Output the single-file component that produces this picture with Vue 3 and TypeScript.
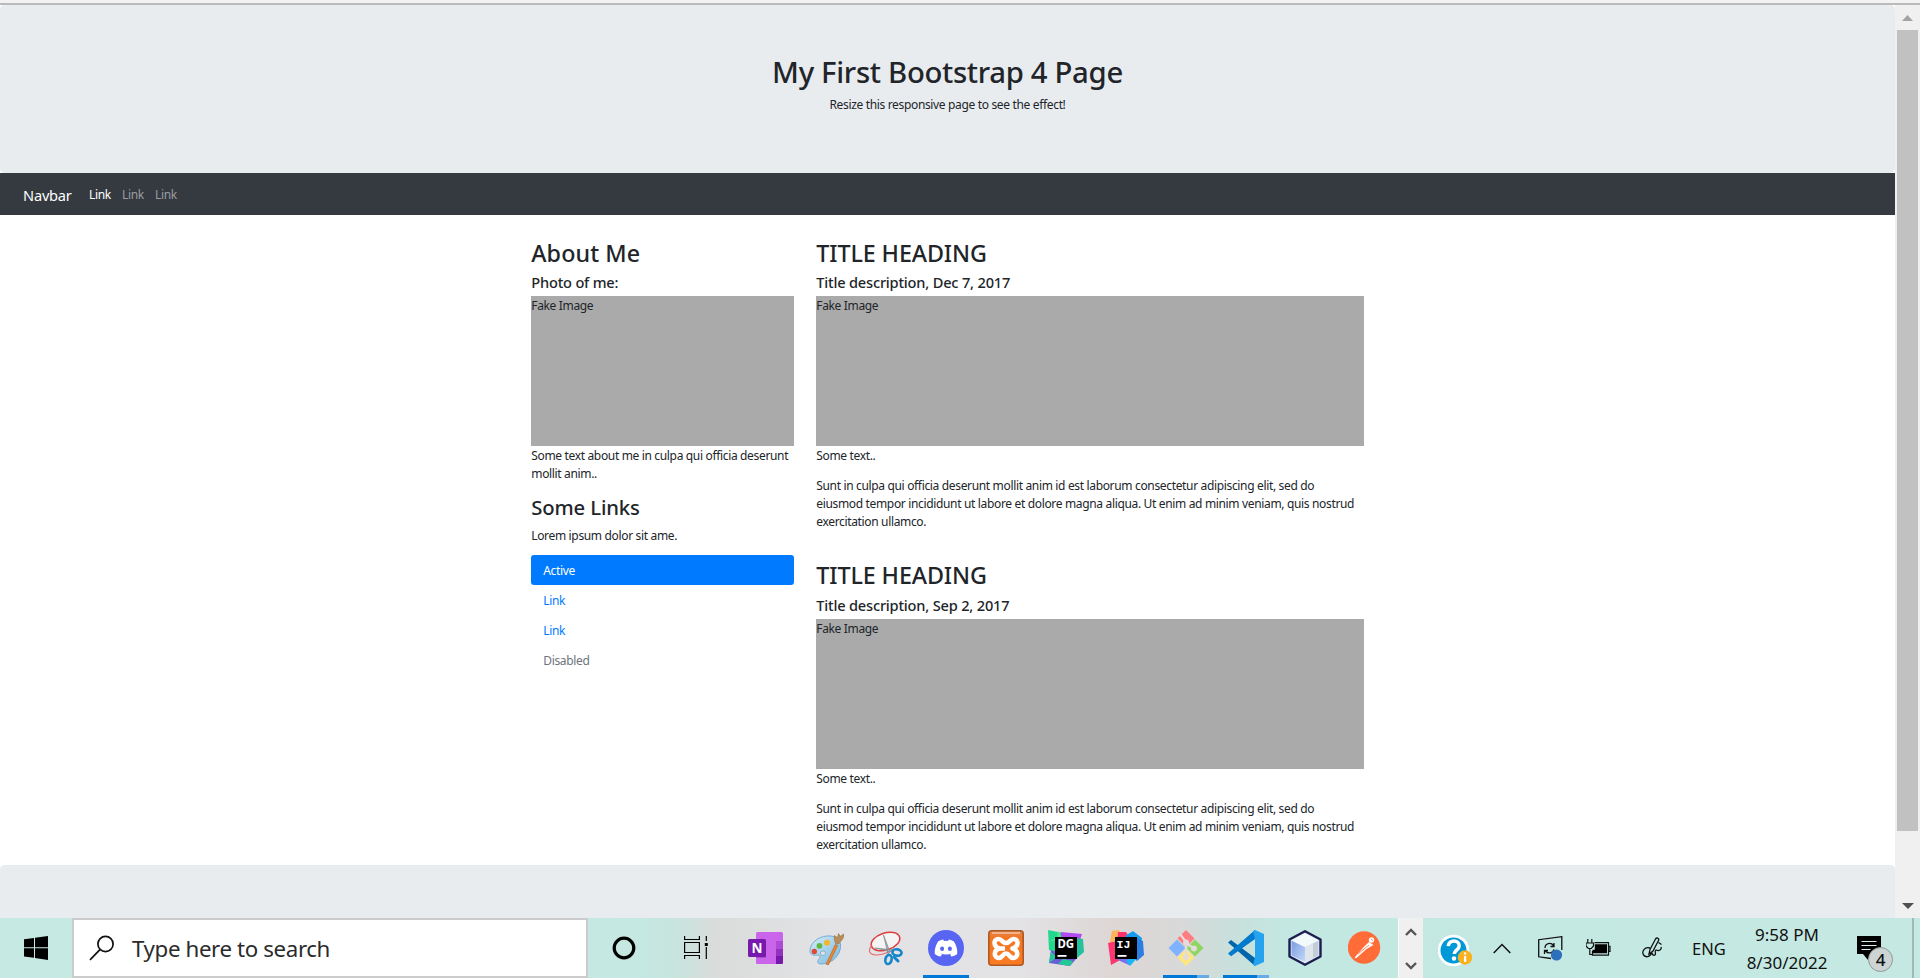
<script setup lang="ts">
interface Post {
  title: string
  description: string
}

interface NavItem {
  label: string
  state: 'active' | 'normal' | 'disabled'
}

const topLinks: NavItem[] = [
  { label: 'Link', state: 'active' },
  { label: 'Link', state: 'normal' },
  { label: 'Link', state: 'normal' },
]

const pills: NavItem[] = [
  { label: 'Active', state: 'active' },
  { label: 'Link', state: 'normal' },
  { label: 'Link', state: 'normal' },
  { label: 'Disabled', state: 'disabled' },
]

const posts: Post[] = [
  { title: 'TITLE HEADING', description: 'Title description, Dec 7, 2017' },
  { title: 'TITLE HEADING', description: 'Title description, Sep 2, 2017' },
]
</script>

<template>
  <div class="screen">
    <div class="browser-edge"></div>
    <div class="viewport">
      <div class="page">
        <header class="jumbotron">
          <h1>My First Bootstrap 4 Page</h1>
          <p>Resize this responsive page to see the effect!</p>
        </header>

        <nav class="navbar">
          <a class="brand">Navbar</a>
          <a v-for="(link, i) in topLinks" :key="i" class="nav-link" :class="link.state">{{ link.label }}</a>
        </nav>

        <main class="container">
          <aside class="side">
            <h2>About Me</h2>
            <h5>Photo of me:</h5>
            <div class="fakeimg">Fake Image</div>
            <p>Some text about me in culpa qui officia deserunt<br />mollit anim..</p>
            <h3>Some Links</h3>
            <p>Lorem ipsum dolor sit ame.</p>
            <ul class="pills">
              <li v-for="(pill, i) in pills" :key="i" :class="pill.state">{{ pill.label }}</li>
            </ul>
          </aside>
          <section class="posts">
            <article v-for="post in posts" :key="post.description">
              <h2>{{ post.title }}</h2>
              <h5>{{ post.description }}</h5>
              <div class="fakeimg">Fake Image</div>
              <p>Some text..</p>
              <p>
                Sunt in culpa qui officia deserunt mollit anim id est laborum consectetur adipiscing elit, sed do<br />
                eiusmod tempor incididunt ut labore et dolore magna aliqua. Ut enim ad minim veniam, quis nostrud<br />
                exercitation ullamco.
              </p>
            </article>
          </section>
        </main>
        <footer class="footer"></footer>
      </div>

      <div class="scrollbar">
        <svg class="arrow up" width="11" height="6" viewBox="0 0 11 6"><path d="M5.5 0 11 6H0z" /></svg>
        <div class="thumb"></div>
        <svg class="arrow down" width="12" height="6" viewBox="0 0 12 6"><path d="M0 0h12L6 6z" /></svg>
      </div>
    </div>

    <div class="taskbar">
      <div class="start">
        <svg width="24" height="24" viewBox="0 0 24 24"><path d="M0 3.3 10 1.9V11.2H0zM11 1.7 24 0V11.2H11zM0 12.2H10V21.8L0 20.5zM11 12.2H24V24L11 22z" /></svg>
      </div>
      <div class="search">
        <svg width="26" height="26" viewBox="0 0 26 26" fill="none" stroke="#111" stroke-width="1.7"><circle cx="16.5" cy="9" r="7.6" /><path d="M11.2 14.4 1 24.8" /></svg>
        <span>Type here to search</span>
      </div>

      <div class="cell cortana">
        <svg width="26" height="26" viewBox="0 0 26 26"><circle cx="13" cy="13" r="9.8" fill="none" stroke="#000" stroke-width="3.2" /></svg>
      </div>
      <div class="cell taskview">
        <svg width="24" height="24" viewBox="0 0 24 24" fill="none" stroke="#000" stroke-width="1.2"><path d="M.6 0V3.5H15.4V0M.6 6.5H15.4V16.5H.6zM.6 23V19.5H15.4V23M22.3 0V5M22.3 11V23" /><path d="M20.8 7h3v3h-3z" fill="#000" stroke="none" /></svg>
      </div>

      <div class="cell">
        <svg width="36" height="36" viewBox="0 0 36 36">
          <rect x="8" y="2" width="27" height="32" rx="1.5" fill="#ca64ea" />
          <path d="M28 11h7v8h-7z" fill="#ae4bd5" /><path d="M28 19h7v7h-7z" fill="#9332bf" /><path d="M28 26h7v6.5a1.5 1.5 0 0 1-1.5 1.5H28z" fill="#7719aa" />
          <path d="M8 10h10v18H8z" fill="#8c35b5" opacity=".5" />
          <rect x="0" y="9" width="18" height="18" rx="1.5" fill="#7719aa" />
          <text x="9" y="23" text-anchor="middle" font-size="13.5" font-weight="700" fill="#fff">N</text>
        </svg>
      </div>
      <div class="cell">
        <svg width="36" height="36" viewBox="0 0 36 36">
          <defs><linearGradient id="palette" x1="0" y1="0" x2="1" y2="1"><stop offset="0" stop-color="#d7eefa" /><stop offset="1" stop-color="#78b7df" /></linearGradient></defs>
          <path d="M2 20C3 11 13 5 23 6c8 1 11 7 9 14-2 8-10 14-19 14-4 0-4-3-2-5s1-4-2-4c-4 1-8-1-7-5z" fill="url(#palette)" stroke="#6ca6ca" stroke-width=".9" />
          <circle cx="6.3" cy="21.5" r="2.7" fill="#dc4939" /><circle cx="11.5" cy="15.8" r="2.9" fill="#5cb93e" /><circle cx="19" cy="12.7" r="3" fill="#f2b62b" /><ellipse cx="15" cy="23.2" rx="2.6" ry="2.3" fill="#e4e4e6" stroke="#6ca6ca" stroke-width=".8" />
          <path d="M27.2 14.5 29.8 15.4 20.4 35 18 34.2z" fill="#e48534" stroke="#b45d18" stroke-width=".5" />
          <path d="M27.5 13.5c-.8-3-2-5.5-1-8l3 2 1-4 2 2.8 4-2.8c-.5 4.5-3 7-6 10.5z" fill="#b88e5c" stroke="#8c673b" stroke-width=".5" />
        </svg>
      </div>
      <div class="cell">
        <svg width="36" height="36" viewBox="0 0 36 36" fill="none">
          <ellipse cx="17.5" cy="11.5" rx="14.8" ry="8.5" transform="rotate(-18 17.5 11.5)" fill="#f4f4f4" stroke="#df3b3d" stroke-width="1.5" />
          <path d="M4 15C-1 21 2 25 8 25c5 0 9-1 14-4" stroke="#eb6567" stroke-width="1.1" />
          <path d="M15.500 5 20 24 22 22zM7 18 26 20 24 22z" fill="#a5acb1" stroke="#81888e" stroke-width=".7" />
          <ellipse cx="29" cy="22.500" rx="4.600" ry="3.200" transform="rotate(10 29 22.500)" stroke="#1686ca" stroke-width="2.600" /><ellipse cx="20.500" cy="29.500" rx="3.100" ry="4.600" transform="rotate(12 20.500 29.500)" stroke="#1686ca" stroke-width="2.600" /><path d="m26 27 4 4" stroke="#1686ca" stroke-width="3" stroke-linecap="round" />
        </svg>
      </div>
      <div class="cell running">
        <svg width="36" height="36" viewBox="0 0 36 36">
          <circle cx="18" cy="18" r="18" fill="#5865f2" />
          <path d="M10.2 11.2c2-1 3.8-1.6 5-1.8l.8 1.5q2-.3 4 0l.8-1.5c1.2.2 3 .8 5 1.8 2.8 4.3 3.8 8.6 3.4 12.7-1.9 1.5-3.8 2.3-5.8 2.7l-1.4-2.2 1.8-.9q-5.8 2.2-11.6 0l1.8.9-1.4 2.2c-2-.4-3.9-1.2-5.8-2.7-.4-4.1.6-8.4 3.4-12.7z" fill="#fff" />
          <ellipse cx="14.1" cy="18.8" rx="2" ry="2.2" fill="#5865f2" /><ellipse cx="21.9" cy="18.8" rx="2" ry="2.2" fill="#5865f2" />
        </svg>
      </div>
      <div class="cell">
        <svg width="36" height="36" viewBox="0 0 36 36">
          <defs><linearGradient id="xampp" x1="0" y1="0" x2="0" y2="1"><stop offset="0" stop-color="#de8852" /><stop offset=".2" stop-color="#f37623" /><stop offset="1" stop-color="#fb7a24" /></linearGradient></defs>
          <rect x=".8" y=".8" width="34.4" height="34.4" rx="3" fill="url(#xampp)" stroke="#ad5923" stroke-width="1.6" />
          <path d="M4 3h28" stroke="#f6c2a0" stroke-width="1.5" />
          <path d="M11.500 18.500C5 16.500 5 9 10.500 9c3.500 0 3.500 4 7.500 4s4-4 7.500-4c5.500 0 5.500 7.500-1 9.500C31 20.500 30.500 28 25 28c-3.500 0-3.500-4.500-7-4.500S14.500 28 11 28c-5.500 0-6-7.500.5-9.500zM12 18.500h5" fill="none" stroke="#fff" stroke-width="4.500" stroke-linejoin="round" />
        </svg>
      </div>
      <div class="cell">
        <svg width="36" height="36" viewBox="0 0 36 36">
          <path d="M0 0 15 3 9 23 1 20z" fill="#22d88f" /><path d="m13 2 21 2-4 13-17 1z" fill="#b14df0" /><path d="m28 8 7 1 1 13-7 6z" fill="#27bf9d" /><path d="m3 20-2 13 21 3 6-7z" fill="#675dd9" /><path d="m3 22 6 5-8 6zM15 29l10 2-3 5-12-2z" fill="#22c994" /><path d="m10 1 4 7-13 4 8-5z" fill="#53e68f" />
          <path d="M7 7h22v22H7z" /><path d="M9.500 25h9v1.800h-9z" fill="#fff" /><text x="17.800" y="17.500" text-anchor="middle" font-size="11.500" font-weight="700" fill="#fff">DG</text>
        </svg>
      </div>
      <div class="cell">
        <svg width="36" height="36" viewBox="0 0 36 36">
          <path d="m4 1 7-1 3 10-6 12-7-6z" fill="#fdb35a" /><path d="m0 13 9-2 5 18-11 6z" fill="#fc3670" /><path d="m10 2 8 0 5 8-14 6z" fill="#ff316b" /><path d="m17 6 8-5 9 7-2 12-9-9z" fill="#159cf2" /><path d="m29 8 6 3 1 14-7 6-8-7z" fill="#2c7fe0" /><path d="m8 28 17 0-4 7-9-4z" fill="#7b6df0" /><path d="m22 28 8-1-8 9-4-5z" fill="#16b6f8" />
          <path d="M7 7h22v22H7z" /><path d="M9.500 25h9v1.800h-9z" fill="#fff" /><text x="15.500" y="17.500" text-anchor="middle" font-size="11.500" font-weight="700" fill="#fff" class="mono">IJ</text>
        </svg>
      </div>
      <div class="cell running grouped">
        <svg width="36" height="36" viewBox="0 0 36 36">
          <path d="m18 0 8.500 8.500L18 17 9.500 8.500z" fill="#ff7c80" /><path d="m9 9.500 8.500 8.500L9 26.500.500 18z" fill="#80b3ff" /><path d="m27 9.500 8.500 8.500-8.500 8.500L18.500 18z" fill="#8ed65f" /><path d="m18 19 8.500 8.500L18 36 9.500 27.500z" fill="#ffe680" />
          <path d="m12 4 6 8v16M18 13l9 6" fill="none" stroke="#e2dddc" stroke-width="2.200" /><circle cx="18" cy="12.500" r="3" fill="#e2dddc" /><circle cx="26" cy="18.500" r="3" fill="#e2dddc" /><circle cx="18" cy="27" r="3" fill="#e2dddc" />
        </svg>
      </div>
      <div class="cell running grouped">
        <svg width="36" height="36" viewBox="0 0 36 36">
          <path d="m0 12.500 3-2.500 24 18v8z" fill="#0065a9" /><path d="m0 23.500 3 2.700L27 9V0z" fill="#007acc" /><path d="m27 0 9 4v28l-9 4-2-1 2-8V9l-2-8z" fill="#25a3ef" />
        </svg>
      </div>
      <div class="cell">
        <svg width="36" height="36" viewBox="0 0 36 36">
          <defs><linearGradient id="cube" x1="0" y1="0" x2="1" y2="1"><stop offset="0" stop-color="#789be4" /><stop offset="1" stop-color="#c6d9f5" /></linearGradient></defs>
          <path d="M17 1.200 32.500 9.500V26.500L17 34.800 1.500 26.500V9.500z" fill="#e6f3f8" stroke="#1b1c50" stroke-width="2.400" stroke-linejoin="round" />
          <path d="M3.500 10.500 17 17v15L3.500 25.500z" fill="url(#cube)" /><path d="M17 17 30.500 10.500v15L17 32z" fill="#c2cdda" /><path d="M17 4 30.500 10.500 17 17 3.500 10.500z" fill="#f2fafb" /><path d="m17 17 8-4v15l-8 4z" fill="#e5ebf1" opacity=".8" />
        </svg>
      </div>
      <div class="cell">
        <svg width="36" height="36" viewBox="0 0 36 36">
          <circle cx="16" cy="17.500" r="16.200" fill="#ff6c37" /><circle cx="23.500" cy="10" r="2.700" fill="#fff" /><path d="m21 12 4.500 3-7 4-10 9-2 .2 1.500-2.500 8.500-9.500z" fill="#fff" /><path d="m10 24 11-9M23 9l2 1.500" stroke="#ff6c37" stroke-width=".8" />
        </svg>
      </div>

      <div class="scroller">
        <svg width="12" height="8" viewBox="0 0 12 8"><path d="m1 7 5-5 5 5" /></svg>
        <svg width="12" height="8" viewBox="0 0 12 8"><path d="m1 1 5 5 5-5" /></svg>
      </div>

      <div class="tray">
        <svg class="help" width="36" height="34" viewBox="0 0 36 34">
          <circle cx="15.500" cy="17.500" r="15.800" fill="#fff" /><circle cx="15.500" cy="17.500" r="13" fill="#0099d8" />
          <path d="M10.300 13.200C10.700 6 21.500 6.400 21.200 13c-.2 4-5 4.300-5 8" fill="none" stroke="#fff" stroke-width="3.500" /><circle cx="16" cy="25.500" r="2.200" fill="#fff" />
          <circle cx="27" cy="24.500" r="7.200" fill="#f9b11e" /><path d="M26 23h2.200v6H26z" fill="#fff" /><circle cx="27.100" cy="20.500" r="1.200" fill="#fff" />
        </svg>
        <svg class="chevron" width="18" height="11" viewBox="0 0 18 11"><path d="m.7 10 8.300-8.500L17.300 10" fill="none" stroke="#111" stroke-width="1.500" /></svg>
        <svg class="sync" width="25" height="25" viewBox="0 0 25 25" fill="none" stroke="#111" stroke-width="1.300">
          <path d="M13 22.500.7 20.800V3.700L23.800.7V14" /><path d="M7 12c0-5 6-6 8.500-2.500M16 7v3.500h-3.500M16 13.500c-1 4-6 4.500-8.500 1.500M6.500 18v-3.500H10" /><circle cx="18.500" cy="19" r="5.600" fill="#2c6fbb" stroke="none" />
        </svg>
        <svg class="battery" width="25" height="18" viewBox="0 0 25 18">
          <path d="M1.800 0v4M5.800 0v4M0 4h7.500v3L5.300 9.500h-3L0 7zM3.800 9.500v6h3" fill="none" stroke="#111" stroke-width="1.200" /><path d="M8.500 3.600h14v12.500H6.500v-4M22.500 7.300H24v5h-1.500" fill="none" stroke="#111" stroke-width="1.200" /><path d="M8.800 5.300H21v9H6.500v-3.500h2.300z" />
        </svg>
        <svg class="pen" width="21" height="22" viewBox="0 0 21 22" fill="none" stroke="#111" stroke-width="1.300">
          <path d="M7 17 8 12.500 13.500 2c1.500-2 4-.5 3 1.500L11 14zM8 11C2.500 9.500-.5 14.500 1.500 18c3 3.500 8 1 8-3 .8 2 1.500 4 3.500 3 1.500-1-1-4 1-5 3 1.500 6-.5 5-3M16.500 5.500l3 2" />
        </svg>
        <span class="lang">ENG</span>
        <div class="clock"><span>9:58 PM</span><span>8/30/2022</span></div>
        <div class="notice">
          <svg width="24" height="24" viewBox="0 0 24 24"><path d="M0 0h24v18H14l-3 6-5-6H0z" /><path d="M4.500 5.500h15M4.500 9.500h15M4.500 13.500h9" stroke="#d8efeb" stroke-width="1.100" /></svg>
          <span class="badge">4</span>
        </div>
      </div>
      <div class="show-desktop"></div>
    </div>
  </div>
</template>

<style>
body {
  margin: 0;
  overflow: hidden;
}
</style>

<style scoped>
.screen {
  width: 1920px;
  height: 978px;
  display: flex;
  flex-direction: column;
  overflow: hidden;
  background: #fff;
  color: #212529;
  font: 400 12px/18px "Noto Sans", "Open Sans", sans-serif;
  letter-spacing: -0.34px;
}

.screen * {
  box-sizing: border-box;
}

.browser-edge {
  flex: none;
  height: 5px;
  background: #f3f3f3;
  border-bottom: 2px solid #bbb;
}

.viewport {
  flex: none;
  display: flex;
  height: 913px;
  overflow: hidden;
}

.page {
  width: 1895px;
}

.jumbotron {
  height: 168px;
  padding: 48px 24px 47px;
  border-radius: 4.5px;
  background: #e9ecef;
  text-align: center;
}

h1, h2, h3, h5, p {
  margin: 0 0 5px;
  padding-top: 1px;
  font-weight: 500;
}

p {
  margin-bottom: 11px;
  font-weight: 400;
}

h1 {
  font-size: 29.3px;
  line-height: 36px;
  letter-spacing: -0.32px;
}

h2 {
  font-size: 23.3px;
  line-height: 28.8px;
  letter-spacing: -0.1px;
}

.side h2 {
  letter-spacing: 0.1px;
}

h3 {
  font-size: 20.3px;
  line-height: 25.2px;
  letter-spacing: -0.14px;
}

h5 {
  font-size: 14.6px;
  line-height: 18px;
  letter-spacing: -0.19px;
}

.navbar {
  display: flex;
  align-items: center;
  height: 42px;
  padding: 2px 23px 0;
  background: #343a40;
}

.brand {
  width: 60px;
  color: #fff;
  font-size: 14.6px;
  letter-spacing: -0.2px;
}

.nav-link {
  width: 33px;
  padding-left: 6px;
  color: #9a9da0;
}

.nav-link.active {
  color: #fff;
}

.container {
  display: flex;
  width: 855px;
  margin: 22.5px auto 0;
}

.side {
  width: 285px;
  padding: 0 11.25px;
}

.posts {
  width: 570px;
  padding: 0 11.25px;
}

article + article {
  margin-top: 30px;
}

article:last-child p:last-child {
  margin-bottom: 11px;
}

article:first-child p:last-child {
  margin-bottom: -1px;
}

.posts p,
.side p {
  white-space: nowrap;
}

.fakeimg {
  height: 150px;
  padding-top: 1px;
  background: #aaa;
}

.pills {
  margin: -0.6px 0 0;
  padding: 0;
  list-style: none;
}

.pills li {
  height: 30px;
  padding: 6.6px 12px 0;
  border-radius: 3px;
  color: #007bff;
}

.pills .active {
  background: #007bff;
  color: #fff;
}

.pills .disabled {
  color: #6c757d;
}

.footer {
  height: 120px;
  border-radius: 4.5px;
  background: #e9ecef;
}

.scrollbar {
  width: 25px;
  display: flex;
  flex-direction: column;
  align-items: center;
  padding: 10px 0 9px;
  background: #f0f0f0;
}

.arrow {
  flex: none;
}

.up {
  fill: #a3a3a3;
}

.down {
  margin-top: auto;
  fill: #505050;
}

.thumb {
  width: 21px;
  height: 801px;
  margin-top: 9px;
  background: #c1c1c1;
}

.taskbar {
  flex: none;
  display: flex;
  height: 60px;
  background: linear-gradient(90deg, #c7e9e4 0, #c5e8e2 640px, #c9e3dd 680px, #d9dcdb 715px, #e3e3e5 830px, #e3e2e4 1020px, #ddd6d5 1115px, #d9d9d9 1180px, #c8e0dc 1235px, #c3e8e2 1290px, #c5e8e2 1920px);
  color: #111;
  letter-spacing: 0;
}

.start {
  width: 72px;
  padding: 18px 0 0 24px;
}

.search {
  width: 516px;
  height: 60px;
  display: flex;
  align-items: center;
  padding: 0 0 0 15px;
  border: 2px solid #ccc;
  background: #fff;
  color: #2b2b2b;
  font-size: 22.3px;
  letter-spacing: -0.38px;
}

.search span {
  margin: 2px 0 0 17px;
}

.cell {
  position: relative;
  width: 60px;
  height: 60px;
  display: flex;
  align-items: center;
  justify-content: center;
  flex: none;
}

.cortana {
  width: 72px;
}

.taskview {
  width: 76px;
  padding-right: 4px;
}

.running::after {
  content: "";
  position: absolute;
  left: 7px;
  bottom: 0;
  width: 46px;
  height: 3px;
  background: #0078d7;
}

.grouped::after {
  background: linear-gradient(90deg, #0078d7 34px, #66ade5 34px);
}

.mono {
  font-family: "Liberation Mono", monospace;
}

.scroller {
  width: 25px;
  margin-left: 2px;
  display: flex;
  flex-direction: column;
  align-items: center;
  justify-content: space-between;
  padding: 10px 0 8px;
  border-left: 1px solid #fff;
  background: #f0f0f0;
}

.scroller path {
  fill: none;
  stroke: #555;
  stroke-width: 2.4;
}

.tray {
  flex: 1;
  display: flex;
  align-items: center;
}

.tray svg {
  flex: none;
}

.help {
  margin: 3px 0 0 15px;
}

.chevron {
  margin-left: 19px;
}

.sync {
  margin-left: 27px;
}

.battery {
  margin-left: 23px;
}

.pen {
  margin-left: 31px;
}

.lang {
  width: 36px;
  margin: 2px 0 0 29px;
  font-size: 16.5px;
}

.clock {
  width: 100px;
  margin: 1px 0 0 9px;
  display: flex;
  flex-direction: column;
  align-items: center;
  gap: 10px;
  font-size: 17px;
}

.notice {
  position: relative;
  height: 24px;
  margin-left: 20px;
}

.notice svg {
  display: block;
}

.badge {
  position: absolute;
  left: 11px;
  top: 11px;
  width: 25px;
  height: 25px;
  border: 1px solid #8f9998;
  border-radius: 50%;
  background: #ccd5d4;
  font-size: 17px;
  font-weight: 500;
  line-height: 23px;
  text-align: center;
}

.show-desktop {
  width: 8px;
  border-left: 2px solid #9fbab5;
}
</style>
